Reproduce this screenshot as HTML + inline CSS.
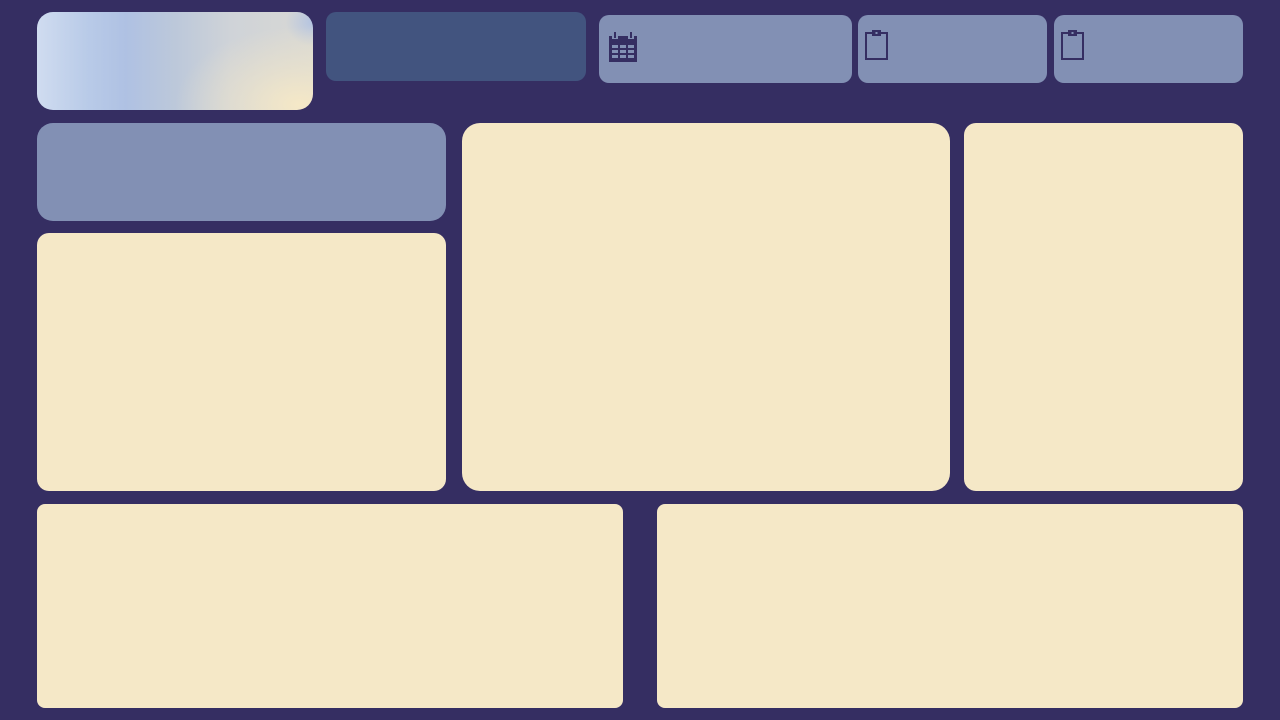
<!DOCTYPE html>
<html><head><style>
body{margin:0;width:1280px;height:720px;background:#352e62;position:relative;overflow:hidden}
div{position:absolute;box-sizing:border-box}
.c{background:#f5e8c7}.s{background:#8290b4}
</style></head><body>
<div style="left:37px;top:12px;width:276px;height:98px;border-radius:16px;background:radial-gradient(ellipse 45% 80% at 95% 95%,rgba(245,232,199,1) 0%,rgba(245,232,199,0.5) 45%,rgba(245,232,199,0) 100%),radial-gradient(ellipse 10% 25% at 100% 10%,rgba(175,193,227,0.9),rgba(175,193,227,0)),linear-gradient(90deg,#d0dcf0 0%,#b9cbe8 18%,#afc1e3 32%,#bcc8da 50%,#cfd3d8 70%,#d8d8d4 100%)"></div>
<div style="left:326px;top:12px;width:260px;height:69px;border-radius:10px;background:#42547f"></div>
<div class="s" style="left:599px;top:15px;width:253px;height:68px;border-radius:10px">
<svg style="position:absolute;left:9px;top:17px" width="30" height="31" viewBox="0 0 30 31"><rect x="1" y="4" width="28" height="26" fill="#352e62"/><g fill="#8290b4"><rect x="4" y="13" width="6" height="3"/><rect x="12" y="13" width="6" height="3"/><rect x="20" y="13" width="6" height="3"/><rect x="4" y="18" width="6" height="3"/><rect x="12" y="18" width="6" height="3"/><rect x="20" y="18" width="6" height="3"/><rect x="4" y="23" width="6" height="3"/><rect x="12" y="23" width="6" height="3"/><rect x="20" y="23" width="6" height="3"/><rect x="4" y="2" width="6" height="5"/><rect x="20" y="2" width="6" height="5"/></g><rect x="6" y="0" width="2" height="6" fill="#352e62"/><rect x="22" y="0" width="2" height="6" fill="#352e62"/></svg></div>
<div class="s" style="left:858px;top:15px;width:189px;height:68px;border-radius:10px">
<svg style="position:absolute;left:6px;top:14px" width="26" height="32" viewBox="0 0 26 32"><rect x="2" y="4" width="21" height="26" fill="none" stroke="#352e62" stroke-width="2"/><rect x="8" y="1" width="9" height="6" fill="#352e62"/><rect x="11.5" y="3" width="2" height="2" fill="#8290b4"/></svg></div>
<div class="s" style="left:1054px;top:15px;width:189px;height:68px;border-radius:10px">
<svg style="position:absolute;left:6px;top:14px" width="26" height="32" viewBox="0 0 26 32"><rect x="2" y="4" width="21" height="26" fill="none" stroke="#352e62" stroke-width="2"/><rect x="8" y="1" width="9" height="6" fill="#352e62"/><rect x="11.5" y="3" width="2" height="2" fill="#8290b4"/></svg></div>
<div class="s" style="left:37px;top:123px;width:409px;height:98px;border-radius:16px"></div>
<div class="c" style="left:37px;top:233px;width:409px;height:258px;border-radius:12px"></div>
<div class="c" style="left:462px;top:123px;width:488px;height:368px;border-radius:18px"></div>
<div class="c" style="left:964px;top:123px;width:279px;height:368px;border-radius:12px"></div>
<div class="c" style="left:37px;top:504px;width:586px;height:204px;border-radius:8px"></div>
<div class="c" style="left:657px;top:504px;width:586px;height:204px;border-radius:8px"></div>
</body></html>
